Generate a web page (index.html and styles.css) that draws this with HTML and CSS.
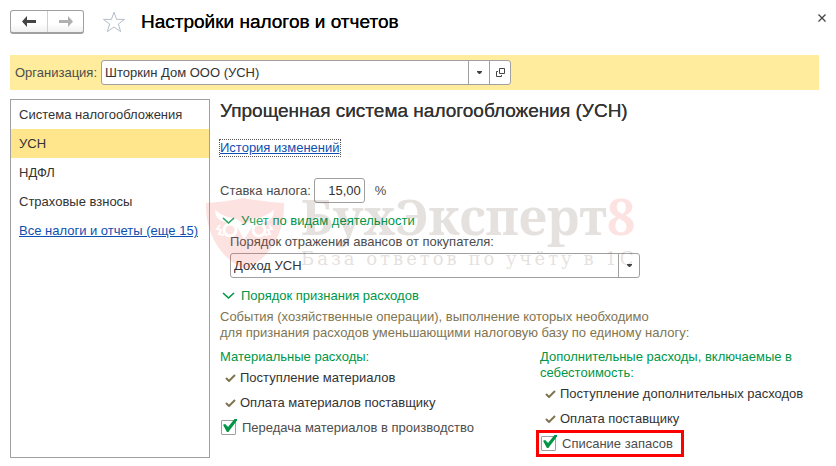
FILE: index.html
```html
<!DOCTYPE html>
<html lang="ru">
<head>
  <meta charset="UTF-8">
  <meta name="viewport" content="width=device-width, initial-scale=1.0">
  <title>Настройки налогов и отчетов</title>
  <link rel="stylesheet" href="styles.css">
</head>
<body>
  <header class="topbar">
    <div class="nav-buttons">
      <button type="button" class="nav-button" aria-label="Назад">
        <svg width="14" height="11" viewBox="0 0 14 11"><path d="M0 5.500 5 0v4h9v3H5v4z" fill="#444"/></svg>
      </button>
      <button type="button" class="nav-button" aria-label="Вперед">
        <svg width="14" height="11" viewBox="0 0 14 11"><path d="M14 5.500 9 0v4H0v3h9v4z" fill="#b0b0b0"/></svg>
      </button>
    </div>
    <button type="button" class="star-button" aria-label="В избранное">
      <svg width="24" height="22" viewBox="0 0 24 22"><path d="M12 1.200 14.600 8.400H22.600L16.300 13 18.700 20.700 12 16 5.300 20.700 7.700 13 1.400 8.400H9.400z" fill="#fff" stroke="#b4bec8"/></svg>
    </button>
    <h1>Настройки налогов и отчетов</h1>
    <button type="button" class="close-button" aria-label="Закрыть">
      <svg width="8" height="8" viewBox="0 0 8 8"><path d="M.5.5l7 7M7.500.5l-7 7" stroke="#444" stroke-width="1.300"/></svg>
    </button>
  </header>

  <div class="org-bar">
    <label for="org">Организация:</label>
    <div class="combo org-combo">
      <input type="text" id="org" value="Шторкин Дом ООО (УСН)">
      <button type="button" aria-label="Выбрать"><svg width="5" height="3" viewBox="0 0 5 3"><path d="M0 0h5v1L3 3H2L0 1z" fill="#444"/></svg></button>
      <button type="button" aria-label="Открыть"><svg width="9" height="9" viewBox="0 0 9 9"><path d="M3.500.5h5v5h-5zM2 3.500H.5v5h5V7" fill="none" stroke="#444"/></svg></button>
    </div>
  </div>

  <div class="columns">
    <nav class="sections">
      <a class="section" href="#system">Система налогообложения</a>
      <a class="section active" href="#usn">УСН</a>
      <a class="section" href="#ndfl">НДФЛ</a>
      <a class="section" href="#insurance">Страховые взносы</a>
      <a class="section all" href="#all">Все налоги и отчеты (еще 15)</a>
    </nav>

    <main>
      <h2>Упрощенная система налогообложения (УСН)</h2>
      <a class="history" href="#history">История изменений</a>

      <div class="rate">
        <label for="rate">Ставка налога:</label>
        <input type="text" id="rate" value="15,00">
        <span>%</span>
      </div>

      <button type="button" class="group-title">
        <svg width="13" height="8" viewBox="0 0 13 8"><path d="M1 1l5.500 5L12 1" fill="none" stroke="#009646" stroke-width="1.600"/></svg>
        Учет по видам деятельности
      </button>
      <div class="advances">
        <label for="advances">Порядок отражения авансов от покупателя:</label>
        <div class="combo">
          <input type="text" id="advances" value="Доход УСН">
          <button type="button" aria-label="Выбрать"><svg width="5" height="3" viewBox="0 0 5 3"><path d="M0 0h5v1L3 3H2L0 1z" fill="#444"/></svg></button>
        </div>
      </div>

      <button type="button" class="group-title">
        <svg width="13" height="8" viewBox="0 0 13 8"><path d="M1 1l5.500 5L12 1" fill="none" stroke="#009646" stroke-width="1.600"/></svg>
        Порядок признания расходов
      </button>
      <p class="hint">События (хозяйственные операции), выполнение которых необходимо<br>для признания расходов уменьшающими налоговую базу по единому налогу:</p>

      <div class="expenses">
        <section>
          <h3>Материальные расходы:</h3>
          <p class="done"><svg width="11" height="8" viewBox="0 0 11 8"><path d="M1 4l3 3 6-6" fill="none" stroke="#7f7551" stroke-width="2"/></svg>Поступление материалов</p>
          <p class="done"><svg width="11" height="8" viewBox="0 0 11 8"><path d="M1 4l3 3 6-6" fill="none" stroke="#7f7551" stroke-width="2"/></svg>Оплата материалов поставщику</p>
          <label class="check"><input type="checkbox" checked>Передача материалов в производство</label>
        </section>
        <section>
          <h3>Дополнительные расходы, включаемые в себестоимость:</h3>
          <p class="done"><svg width="11" height="8" viewBox="0 0 11 8"><path d="M1 4l3 3 6-6" fill="none" stroke="#7f7551" stroke-width="2"/></svg>Поступление дополнительных расходов</p>
          <p class="done"><svg width="11" height="8" viewBox="0 0 11 8"><path d="M1 4l3 3 6-6" fill="none" stroke="#7f7551" stroke-width="2"/></svg>Оплата поставщику</p>
          <label class="check marked"><input type="checkbox" checked>Списание запасов</label>
        </section>
      </div>

      <div class="watermark" aria-hidden="true">
        <svg width="78" height="72" viewBox="0 0 78 72">
          <path d="M0 5Q20 4 38 0 58 4 78 5C79 32 66 60 39 71 12 60-1 32 0 5z" fill="#f0463c"/>
          <path d="M9 12Q19 20 31 21L38 27 46 21Q58 20 68 12 68 22 58 24 49 25 44 32L38 42 33 32Q28 25 19 24 9 22 9 12z" fill="#fff"/>
          <g fill="none" stroke="#fff" stroke-width="3"><circle cx="24" cy="32" r="6"/><circle cx="53" cy="32" r="6"/></g>
          <path d="M14 27l-3 4 4 1-2 4 5 1M63 27l3 4-4 1 2 4-5 1M32 41l3 3M45 41l-3 3" fill="none" stroke="#fff" stroke-width="2"/>
        </svg>
        <div>
          <div class="brand">БухЭксперт<span>8</span></div>
          <div class="slogan">База ответов по учёту в 1С</div>
        </div>
      </div>
    </main>
  </div>
</body>
</html>
```

FILE: styles.css
```css
* { box-sizing: border-box; }
body { margin: 0; padding: 8px 17px 8px 10px; font: 13px/16px "Liberation Sans", Arial, sans-serif; color: #333; background: #fff; }
button { font: inherit; color: inherit; border: none; background: none; padding: 0; cursor: pointer; }
input { font: inherit; color: inherit; }
h1, h2, h3, p { margin: 0; font-weight: normal; }
a { color: #0f4fb0; }
svg { display: block; flex: none; }

.topbar { display: flex; align-items: center; height: 28px; margin-right: -7px; }
.nav-buttons { display: flex; border: 1px solid #a0a0a0; border-bottom-width: 2px; border-radius: 3px; background: linear-gradient(#fff 60%, #f0f0f0); }
.nav-button { display: flex; align-items: center; justify-content: center; width: 36px; height: 21px; }
.nav-button + .nav-button { border-left: 1px solid #d0d0d0; }
.star-button { margin: 0 15px 0 18px; }
h1 { font-size: 19px; line-height: 24px; color: #000; text-shadow: 0 0 0 #000; }
.close-button { margin: -8px 0 0 auto; }

.org-bar { display: flex; align-items: center; gap: 4px; margin-top: 19px; padding: 5px; height: 35px; background: #ffec9c; }
.org-bar label { color: #4d4d4d; }
.combo { display: flex; height: 25px; background: #fff; border: 1px solid #a0a0a0; border-radius: 3px; }
.combo input { flex: 1; min-width: 0; border: none; padding: 0 3px; background: none; outline: none; }
.combo button { display: flex; align-items: center; justify-content: center; width: 21px; border-left: 1px solid #a0a0a0; }
.org-combo { width: 410px; }

.columns { display: flex; gap: 10px; margin-top: 9px; }
.sections { width: 200px; border: 1px solid #a0a0a0; flex: none; }
.section { display: block; padding: 0 8px; line-height: 29px; color: #333; text-decoration: none; }
.section.active { background: #ffe68c; }
.section.all { color: #0f4fb0; text-decoration: underline; }

main { position: relative; flex: 1; min-width: 0; padding-bottom: 4px; }
h2 { font-size: 19px; line-height: 24px; text-shadow: 0 0 0 #333; }
.history { display: inline-block; margin-top: 17px; outline: 1px dotted #555; }
.rate { display: flex; align-items: center; gap: 3px; margin-top: 22px; color: #4d4d4d; }
.rate input { width: 51px; height: 25px; padding: 0 3px; text-align: right; color: #333; background: none; border: 1px solid #a0a0a0; border-radius: 3px; }
.rate span { margin-left: 7px; }
.group-title { display: flex; align-items: center; gap: 6px; margin: 10px 0 0 2px; color: #009646; }
.advances { width: 410px; margin: 5px 0 0 10px; }
.advances label { display: block; margin-bottom: 3px; color: #4d4d4d; }
.hint { margin-top: 5px; color: #7f7551; }
.expenses { display: flex; gap: 60px; margin-top: 8px; }
.expenses section { width: 260px; }
h3 { font-size: 13px; color: #009646; }
.done { display: flex; align-items: center; gap: 4px; height: 25px; padding-left: 5px; white-space: nowrap; }
.check { display: flex; align-items: center; gap: 6px; width: max-content; height: 25px; padding-left: 1px; color: #4d4d4d; }
.check input { appearance: none; position: relative; width: 15px; height: 15px; margin: 0; border: 1px solid #a0a0a0; border-radius: 1px; background: #fff; }
.check input:checked::before {
  content: "";
  position: absolute;
  top: -2px;
  left: 1px;
  width: 14px;
  height: 13px;
  background: #009646;
  clip-path: polygon(0 45%, 16% 38%, 36% 62%, 82% 0, 100% 0, 100% 12%, 38% 100%, 28% 100%);
}
.marked { height: 21px; margin: 2px 0 0 -1px; padding: 0 8px 0 2px; outline: 3px solid #f00; }

.watermark { position: absolute; top: 99px; left: -14px; display: flex; gap: 17px; opacity: .15; pointer-events: none; white-space: nowrap; }
.brand { margin-top: -10px; font: bold 50px/56px "Noto Serif", "DejaVu Serif", serif; color: #5a3c32; }
.brand span { color: #f0463c; }
.slogan { margin-top: 5px; font: 18px/20px "DejaVu Serif", serif; letter-spacing: 3px; color: #5a3c32; }
```
